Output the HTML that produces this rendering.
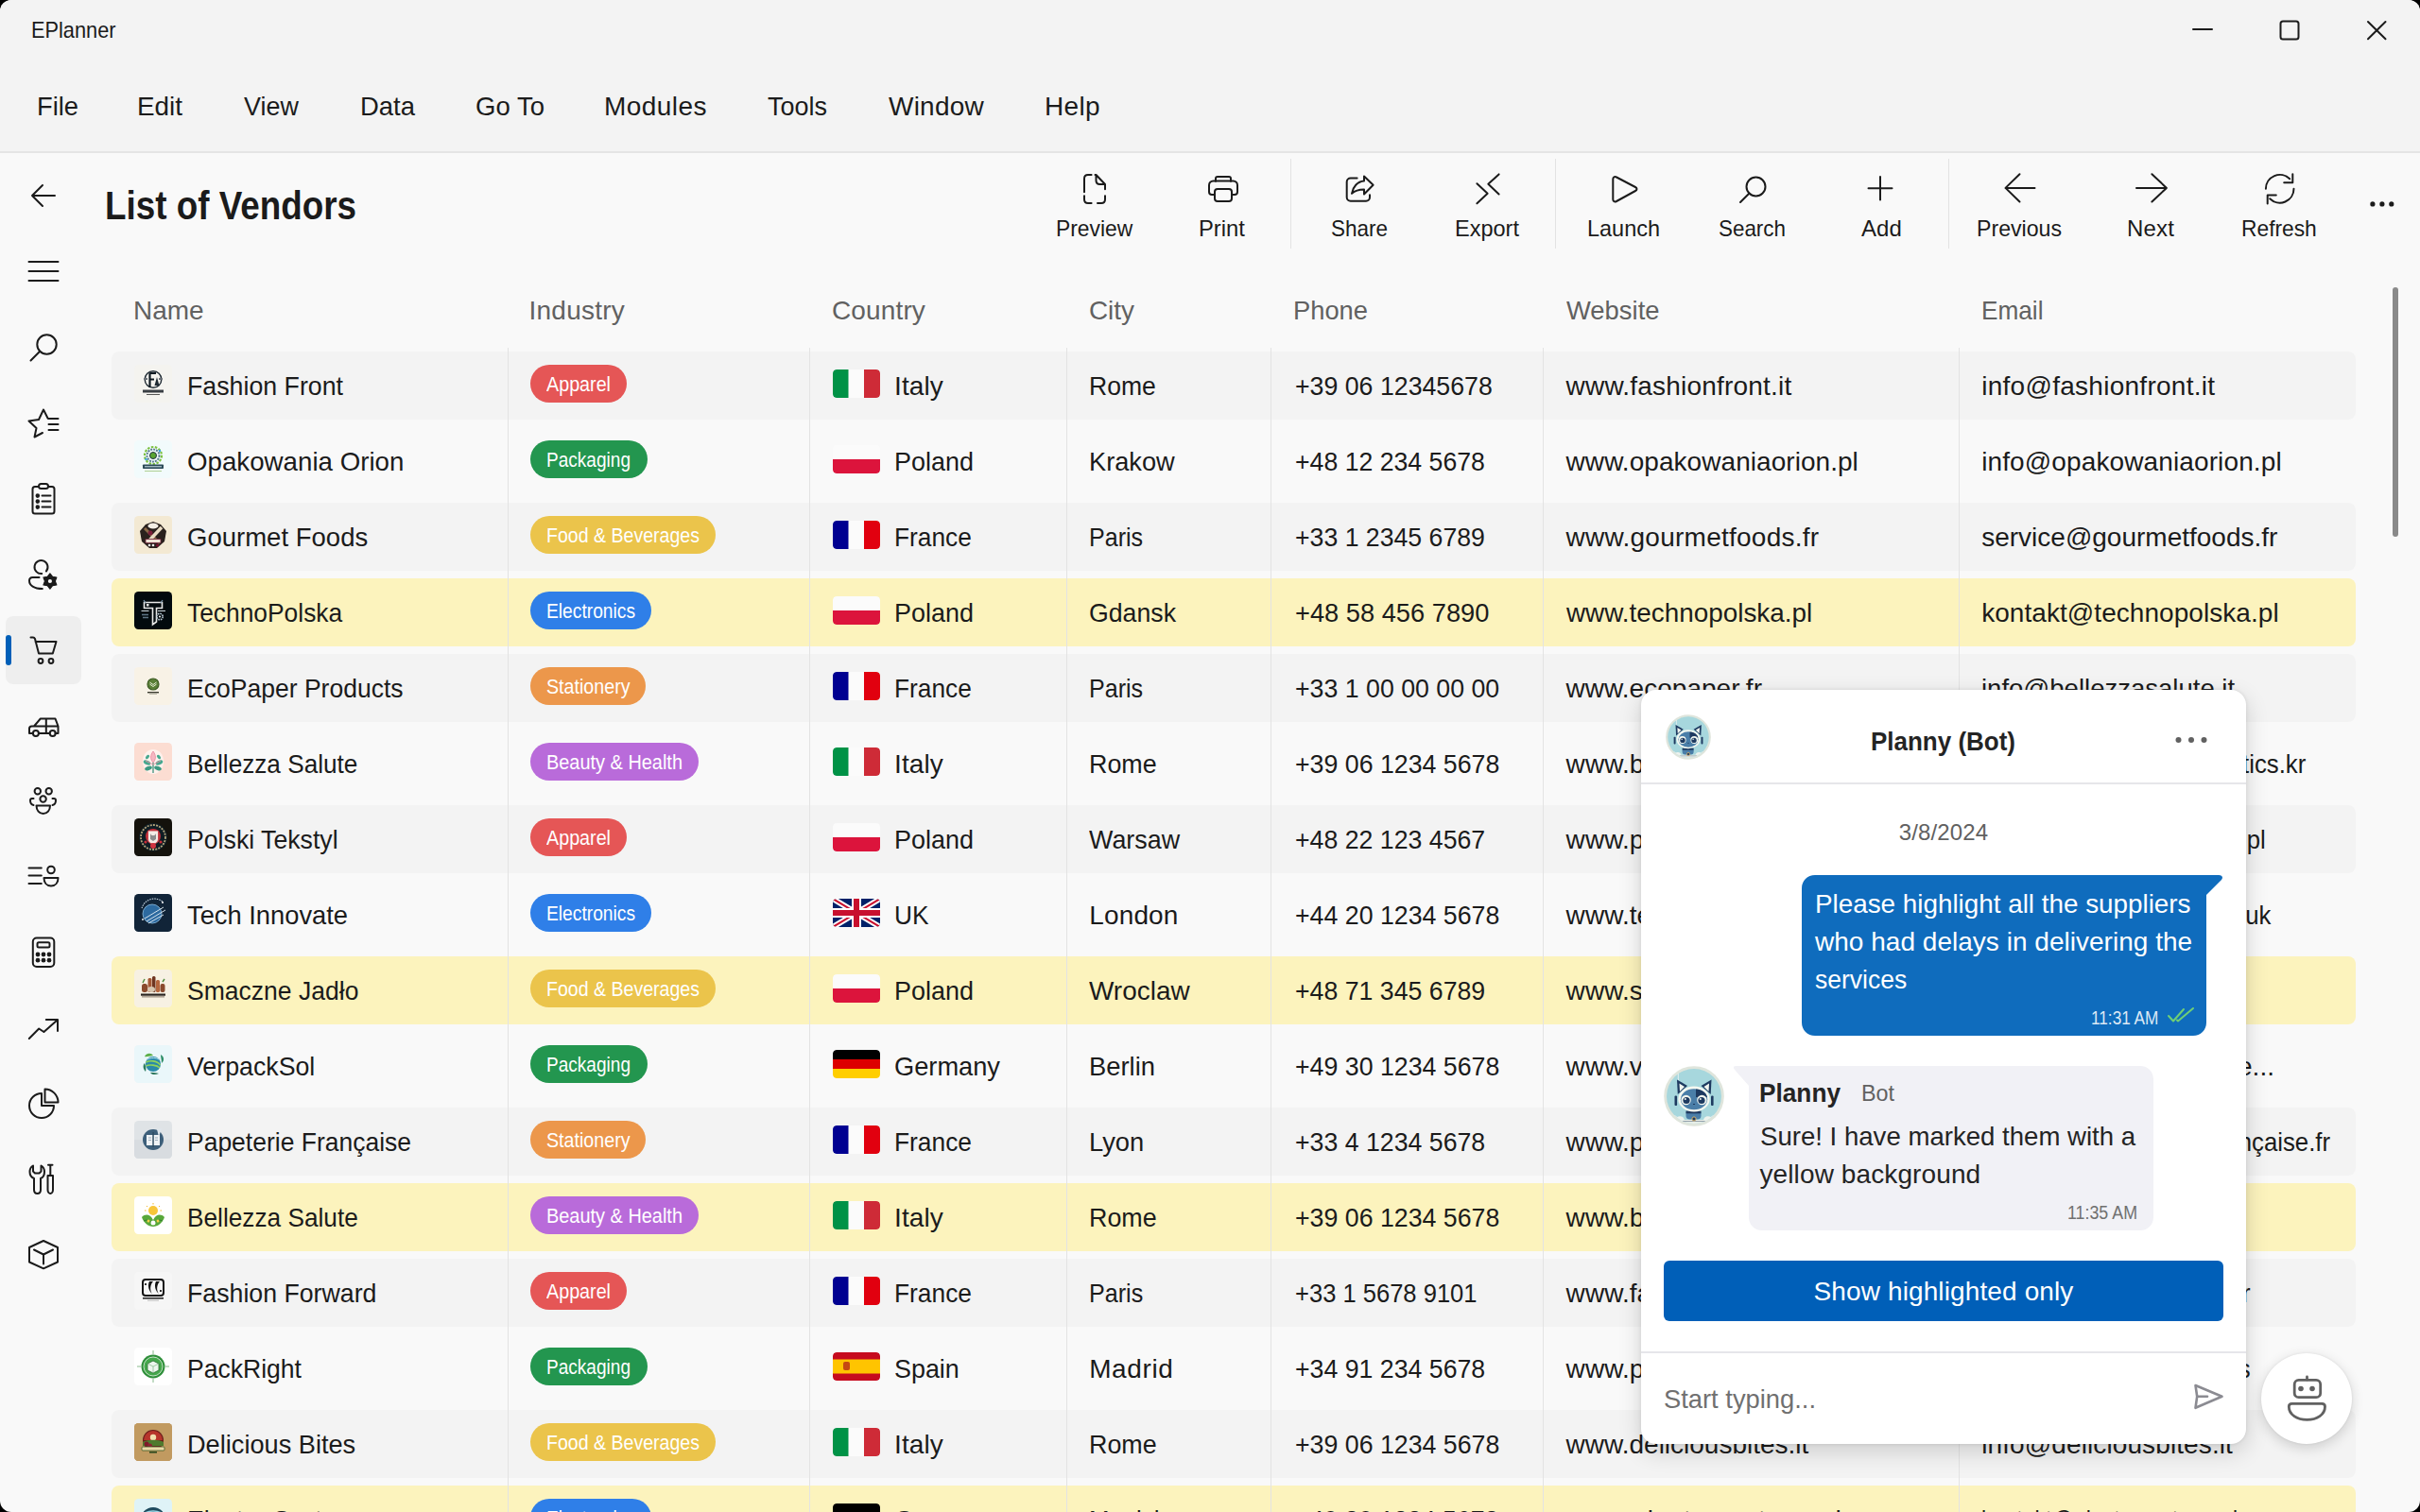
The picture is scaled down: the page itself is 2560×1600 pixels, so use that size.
<!DOCTYPE html>
<html><head><meta charset='utf-8'><title>EPlanner - List of Vendors</title>
<style>
html,body{margin:0;padding:0;background:#000;width:2560px;height:1600px;overflow:hidden}
#win{position:absolute;left:0;top:0;width:2560px;height:1600px;background:#f9f9f9;border-radius:12px;overflow:hidden;font-family:"Liberation Sans", sans-serif}
.t{position:absolute;white-space:pre;font-family:"Liberation Sans", sans-serif;transform-origin:0 0}
</style></head><body><div id='win'>
<div style='position:absolute;left:0px;top:0px;width:2560px;height:160px;background:#f3f3f3;border-radius:0px;'></div>
<div style='position:absolute;left:0px;top:160px;width:2560px;height:2px;background:#e5e5e5;border-radius:0px;'></div>
<div class='t' style='left:33.0px;top:20.0px;font-size:24px;line-height:24px;color:#1b1b1b;transform:scaleX(0.9065);'>EPlanner</div>
<svg style='position:absolute;left:2310px;top:10px;' width='40' height='40' viewBox='2310 10 40 40' fill='none' stroke='#1b1b1b' stroke-width='2' stroke-linecap='round' stroke-linejoin='round'><path d='M2320 31H2340' stroke-width='2'/></svg>
<svg style='position:absolute;left:2400px;top:10px;' width='44' height='44' viewBox='2400 10 44 44' fill='none' stroke='#1b1b1b' stroke-width='2' stroke-linecap='round' stroke-linejoin='round'><rect x='2412.5' y='22.5' width='19' height='19' rx='2.5' stroke-width='2'/></svg>
<svg style='position:absolute;left:2494px;top:12px;' width='40' height='40' viewBox='2494 12 40 40' fill='none' stroke='#1b1b1b' stroke-width='2' stroke-linecap='round' stroke-linejoin='round'><path d='M2505 23L2523.5 41.2M2523.5 23L2505 41.2' stroke-width='2'/></svg>
<div class='t' style='left:39.0px;top:99.0px;font-size:28px;line-height:28px;color:#1b1b1b;transform:scaleX(0.9751);'>File</div>
<div class='t' style='left:145.0px;top:99.0px;font-size:28px;line-height:28px;color:#1b1b1b;transform:scaleX(0.9948);'>Edit</div>
<div class='t' style='left:258.2px;top:99.0px;font-size:28px;line-height:28px;color:#1b1b1b;transform:scaleX(0.9603);'>View</div>
<div class='t' style='left:381.0px;top:99.0px;font-size:28px;line-height:28px;color:#1b1b1b;transform:scaleX(0.9805);'>Data</div>
<div class='t' style='left:503.0px;top:99.0px;font-size:28px;line-height:28px;color:#1b1b1b;transform:scaleX(0.9838);'>Go To</div>
<div class='t' style='left:639.0px;top:99.0px;font-size:28px;line-height:28px;color:#1b1b1b;letter-spacing:0.451px;'>Modules</div>
<div class='t' style='left:812.0px;top:99.0px;font-size:28px;line-height:28px;color:#1b1b1b;transform:scaleX(0.9637);'>Tools</div>
<div class='t' style='left:940.0px;top:99.0px;font-size:28px;line-height:28px;color:#1b1b1b;letter-spacing:0.234px;'>Window</div>
<div class='t' style='left:1105.0px;top:99.0px;font-size:28px;line-height:28px;color:#1b1b1b;letter-spacing:0.352px;'>Help</div>
<div class='t' style='left:111.0px;top:197.3px;font-size:42px;line-height:42px;color:#1b1b1b;font-weight:700;transform:scaleX(0.8768);'>List of Vendors</div>
<div class='t' style='left:1116.7px;top:230.0px;font-size:24px;line-height:24px;color:#1b1b1b;transform:scaleX(0.9513);'>Preview</div>
<div class='t' style='left:1268.1px;top:230.0px;font-size:24px;line-height:24px;color:#1b1b1b;transform:scaleX(0.9907);'>Print</div>
<div class='t' style='left:1408.0px;top:230.0px;font-size:24px;line-height:24px;color:#1b1b1b;transform:scaleX(0.9368);'>Share</div>
<div class='t' style='left:1539.0px;top:230.0px;font-size:24px;line-height:24px;color:#1b1b1b;transform:scaleX(0.9802);'>Export</div>
<div class='t' style='left:1679.0px;top:230.0px;font-size:24px;line-height:24px;color:#1b1b1b;transform:scaleX(0.9778);'>Launch</div>
<div class='t' style='left:1818.0px;top:230.0px;font-size:24px;line-height:24px;color:#1b1b1b;transform:scaleX(0.9336);'>Search</div>
<div class='t' style='left:1969.0px;top:230.0px;font-size:24px;line-height:24px;color:#1b1b1b;letter-spacing:0.099px;'>Add</div>
<div class='t' style='left:2091.0px;top:230.0px;font-size:24px;line-height:24px;color:#1b1b1b;transform:scaleX(0.9639);'>Previous</div>
<div class='t' style='left:2250.0px;top:230.0px;font-size:24px;line-height:24px;color:#1b1b1b;letter-spacing:0.160px;'>Next</div>
<div class='t' style='left:2371.4px;top:230.0px;font-size:24px;line-height:24px;color:#1b1b1b;transform:scaleX(0.9495);'>Refresh</div>
<div style='position:absolute;left:1364.5px;top:168px;width:1.5px;height:95px;background:#e3e3e3;border-radius:0px;'></div>
<div style='position:absolute;left:1644.5px;top:168px;width:1.5px;height:95px;background:#e3e3e3;border-radius:0px;'></div>
<div style='position:absolute;left:2060.5px;top:168px;width:1.5px;height:95px;background:#e3e3e3;border-radius:0px;'></div>
<svg style='position:absolute;left:1140px;top:180px;' width='36' height='40' viewBox='1140 180 36 40' fill='none' stroke='#1b1b1b' stroke-width='2' stroke-linecap='round' stroke-linejoin='round'><path d='M1154.6 185H1151C1148.5 185 1147 186.5 1147 189V203.2M1147 207.2V211C1147 213.5 1148.5 215 1151 215H1154.6M1161 215H1165C1167.5 215 1169 213.5 1169 211V207.2M1169 200.3V195L1159.5 185H1158.5M1159.5 185V191C1159.5 193.5 1161 195 1163.5 195H1169'/></svg>
<svg style='position:absolute;left:1274px;top:180px;' width='40' height='40' viewBox='1274 180 40 40' fill='none' stroke='#1b1b1b' stroke-width='2' stroke-linecap='round' stroke-linejoin='round'><path d='M1286 192V189C1286 187.5 1287 187 1288 187H1300C1301 187 1302 187.5 1302 189V192M1284 206H1282C1280 206 1279 205 1279 203V196C1279 193.5 1281 191.5 1283.5 191.5H1304.5C1307 191.5 1309 193.5 1309 196V203C1309 205 1308 206 1306 206H1304M1288 200H1300C1302 200 1303 201 1303 203V210C1303 212 1302 213 1300 213H1288C1286 213 1285 212 1285 210V203C1285 201 1286 200 1288 200Z'/></svg>
<svg style='position:absolute;left:1418px;top:180px;' width='42' height='40' viewBox='1418 180 42 40' fill='none' stroke='#1b1b1b' stroke-width='2' stroke-linecap='round' stroke-linejoin='round'><path d='M1435.6 188.6H1428.7C1426.5 188.6 1424.7 190.4 1424.7 192.6V208.8C1424.7 211 1426.5 212.8 1428.7 212.8H1445C1447.2 212.8 1449 211 1449 208.8V206.2M1443 186.5L1452.6 195.7L1443 205.5V200.5C1437 200.5 1433 202 1430 204.8C1431 198 1436 192 1443 191.5Z'/></svg>
<svg style='position:absolute;left:1556px;top:178px;' width='36' height='42' viewBox='1556 178 36 42' fill='none' stroke='#1b1b1b' stroke-width='2' stroke-linecap='round' stroke-linejoin='round'><path d='M1562.4 194.3L1573.6 204.8L1562.4 215.3M1585.6 184.4L1574.3 194.7L1585.6 205.5'/></svg>
<svg style='position:absolute;left:1700px;top:180px;' width='40' height='40' viewBox='1700 180 40 40' fill='none' stroke='#1b1b1b' stroke-width='2' stroke-linecap='round' stroke-linejoin='round'><path d='M1706.3 189.5V211C1706.3 213 1708 214 1710 213L1730 202C1732 201 1732 199 1730 198L1710 187.5C1708 186.5 1706.3 187.5 1706.3 189.5Z'/></svg>
<svg style='position:absolute;left:1834px;top:180px;' width='40' height='40' viewBox='1834 180 40 40' fill='none' stroke='#1b1b1b' stroke-width='2' stroke-linecap='round' stroke-linejoin='round'><circle cx='1857.5' cy='197.5' r='10'/><path d='M1850.5 204.5L1841 214'/></svg>
<svg style='position:absolute;left:1972px;top:180px;' width='36' height='36' viewBox='1972 180 36 36' fill='none' stroke='#1b1b1b' stroke-width='2' stroke-linecap='round' stroke-linejoin='round'><path d='M1989 187V211.5M1976.5 199.2H2001.5'/></svg>
<svg style='position:absolute;left:2116px;top:180px;' width='42' height='40' viewBox='2116 180 42 40' fill='none' stroke='#1b1b1b' stroke-width='2' stroke-linecap='round' stroke-linejoin='round'><path d='M2152.5 198.9H2121.5M2136.5 184.3L2121.5 198.9L2136.5 213.5'/></svg>
<svg style='position:absolute;left:2254px;top:180px;' width='42' height='40' viewBox='2254 180 42 40' fill='none' stroke='#1b1b1b' stroke-width='2' stroke-linecap='round' stroke-linejoin='round'><path d='M2260 198.9H2291.9M2276.4 184.3L2291.9 198.9L2276.4 213.5'/></svg>
<svg style='position:absolute;left:2390px;top:178px;' width='44' height='44' viewBox='2390 178 44 44' fill='none' stroke='#1b1b1b' stroke-width='2' stroke-linecap='round' stroke-linejoin='round'><path d='M2396.9 199.8A14.8 14.8 0 0 1 2422.2 189.3M2425.3 184.2V193.3H2416.2M2426.5 199.8A14.8 14.8 0 0 1 2401.2 210.3M2398.7 215.6V206.4H2407.8'/></svg>
<svg style='position:absolute;left:2500px;top:205px' width='40' height='20' viewBox='2500 205 40 20'><circle cx='2509.9' cy='215.9' r='2.6' fill='#1b1b1b'/><circle cx='2519.9' cy='215.9' r='2.6' fill='#1b1b1b'/><circle cx='2529.8' cy='215.9' r='2.6' fill='#1b1b1b'/></svg>
<div style='position:absolute;left:6px;top:652px;width:80px;height:72px;background:#eeeeee;border-radius:8px;'></div>
<div style='position:absolute;left:6px;top:672px;width:6px;height:32px;background:#005fb8;border-radius:3px;'></div>
<svg style='position:absolute;left:0;top:160px' width='100' height='1200' viewBox='0 160 100 1200' fill='none' stroke='#1b1b1b' stroke-width='2' stroke-linecap='round' stroke-linejoin='round'><path d='M58 207H34M45 196L34 207L45 218'/><path d='M30.5 277H61.5M30.5 287H61.5M30.5 297H61.5'/><circle cx='49.5' cy='364.5' r='10.2'/><path d='M42.2 371.8L32.5 381.5'/><path d='M50.5 442.5L46 433.5L41 444L30.5 445.5L38.5 453L36.5 462.5L45 458M51 443H61.5M51.5 449H61.5M51.5 455H61.5'/><rect x='34.5' y='515' width='23' height='28.5' rx='2.5'/><rect x='41' y='512' width='10' height='5' rx='2.5' fill='#f9f9f9'/><path d='M44.5 524.6H53.5M44.5 530.6H53.5M44.5 536.6H53.5'/><circle cx='39.8' cy='524.6' r='1.3' fill='#1b1b1b'/><circle cx='39.8' cy='530.6' r='1.3' fill='#1b1b1b'/><circle cx='39.8' cy='536.6' r='1.3' fill='#1b1b1b'/><path d='M48.9 604.5A7 7 0 1 0 44.2 607'/><path d='M41.5 611H34.5C32.5 611 31 612.5 31 614.5C31 619.5 36 623 44.8 623'/><path d='M52.90 607.00L55.60 610.32L59.83 611.00L58.30 615.00L59.83 619.00L55.60 619.68L52.90 623.00L50.20 619.68L45.97 619.00L47.50 615.00L45.97 611.00L50.20 610.32Z' fill='#1b1b1b' stroke='#1b1b1b' stroke-width='1.2'/><circle cx='52.9' cy='615' r='2.1' fill='#f9f9f9' stroke='none'/><path d='M32.5 674.5H35C36 674.5 36.5 675 37 676L41 691.5H55.8L59.5 679H37.5'/><circle cx='43' cy='699.5' r='2.4'/><circle cx='54' cy='699.5' r='2.4'/><path d='M35 776H31V771C31 769.5 32 768.5 33.5 768.5H36L42.8 760.5H58.5L61.5 768.5V776H58.5M41 776H52.5M36 768.5H61M48.8 760.5V776'/><circle cx='37.9' cy='776' r='3'/><circle cx='55.7' cy='776' r='3'/><circle cx='39.8' cy='837.3' r='3.2'/><circle cx='51.7' cy='837.3' r='3.2'/><circle cx='45.6' cy='845.5' r='3.2'/><path d='M35.5 845H34C32.5 845 32 846 32 847C32 849.5 33.5 851.5 35.5 852M55.5 845H57C58.5 845 59 846 59 847C59 849.5 57.5 851.5 55.5 852M38.5 852.5H53C53 857.5 50 861 45.7 861C41.5 861 38.5 857.5 38.5 852.5Z'/><path d='M30.5 918.6H43.8M30.5 926.6H43.8M30.5 935H43.8'/><circle cx='54' cy='920.5' r='3.8'/><path d='M46.5 929H61.5C61.5 934 58.5 937.5 54 937.5C49.5 937.5 46.5 934 46.5 929Z'/><rect x='34.8' y='992.5' width='22.5' height='30.5' rx='4'/><rect x='39.5' y='997.2' width='13' height='5.2' rx='1.5'/><circle cx='40' cy='1010' r='1.4' fill='#1b1b1b'/><circle cx='46' cy='1010' r='1.4' fill='#1b1b1b'/><circle cx='52' cy='1010' r='1.4' fill='#1b1b1b'/><circle cx='40' cy='1016.2' r='1.4' fill='#1b1b1b'/><circle cx='46' cy='1016.2' r='1.4' fill='#1b1b1b'/><circle cx='52' cy='1016.2' r='1.4' fill='#1b1b1b'/><path d='M30.8 1099L41.2 1088.5L46.4 1092L60.8 1079.3M48.8 1079H61V1091'/><path d='M44 1157A13 13 0 1 0 57 1170H44Z'/><path d='M47.5 1152.5A14 14 0 0 1 61.5 1166.5H47.5Z'/><path d='M35 1233.5C32.5 1235 31.5 1237.5 31.5 1240C31.5 1243.5 33.5 1246 36 1247V1259C36 1261.5 37.5 1263 39.5 1263C41.5 1263 43 1261.5 43 1259V1247C45.5 1246 47 1243.5 47 1240C47 1237.5 46 1235 43.5 1233.5V1239.5L41.5 1241.5H37L35 1239.5Z'/><path d='M51 1232.8H55.5M53.3 1233V1244M50.5 1244H56V1259C56 1261.5 54.5 1263 53.3 1263C52 1263 50.5 1261.5 50.5 1259Z'/><path d='M46 1313L61 1320V1335.5L46 1342.3L31 1335.5V1320Z'/><path d='M36 1322.5L46 1327.5L56 1322.5M46 1327.5V1337.5'/></svg>
<div class='t' style='left:141.0px;top:315.0px;font-size:28px;line-height:28px;color:#616161;'>Name</div>
<div class='t' style='left:559.5px;top:315.0px;font-size:28px;line-height:28px;color:#616161;letter-spacing:0.236px;'>Industry</div>
<div class='t' style='left:880.0px;top:315.0px;font-size:28px;line-height:28px;color:#616161;letter-spacing:0.136px;'>Country</div>
<div class='t' style='left:1152.0px;top:315.0px;font-size:28px;line-height:28px;color:#616161;transform:scaleX(0.9951);'>City</div>
<div class='t' style='left:1368.0px;top:315.0px;font-size:28px;line-height:28px;color:#616161;transform:scaleX(0.9757);'>Phone</div>
<div class='t' style='left:1657.0px;top:315.0px;font-size:28px;line-height:28px;color:#616161;transform:scaleX(0.9787);'>Website</div>
<div class='t' style='left:2096.0px;top:315.0px;font-size:28px;line-height:28px;color:#616161;transform:scaleX(0.9355);'>Email</div>
<div style='position:absolute;left:118px;top:372px;width:2374px;height:72px;background:#f3f3f3;border-radius:8px;'></div>
<div style='position:absolute;left:118px;top:532px;width:2374px;height:72px;background:#f3f3f3;border-radius:8px;'></div>
<div style='position:absolute;left:118px;top:612px;width:2374px;height:72px;background:#fcf3bd;border-radius:8px;'></div>
<div style='position:absolute;left:118px;top:692px;width:2374px;height:72px;background:#f3f3f3;border-radius:8px;'></div>
<div style='position:absolute;left:118px;top:852px;width:2374px;height:72px;background:#f3f3f3;border-radius:8px;'></div>
<div style='position:absolute;left:118px;top:1012px;width:2374px;height:72px;background:#fcf3bd;border-radius:8px;'></div>
<div style='position:absolute;left:118px;top:1172px;width:2374px;height:72px;background:#f3f3f3;border-radius:8px;'></div>
<div style='position:absolute;left:118px;top:1252px;width:2374px;height:72px;background:#fcf3bd;border-radius:8px;'></div>
<div style='position:absolute;left:118px;top:1332px;width:2374px;height:72px;background:#f3f3f3;border-radius:8px;'></div>
<div style='position:absolute;left:118px;top:1492px;width:2374px;height:72px;background:#f3f3f3;border-radius:8px;'></div>
<div style='position:absolute;left:118px;top:1572px;width:2374px;height:72px;background:#fcf3bd;border-radius:8px;'></div>
<div style='position:absolute;left:537px;top:368px;width:1px;height:1232px;background:#e3e3e3;border-radius:0px;'></div>
<div style='position:absolute;left:856px;top:368px;width:1px;height:1232px;background:#e3e3e3;border-radius:0px;'></div>
<div style='position:absolute;left:1127.5px;top:368px;width:1px;height:1232px;background:#e3e3e3;border-radius:0px;'></div>
<div style='position:absolute;left:1344px;top:368px;width:1px;height:1232px;background:#e3e3e3;border-radius:0px;'></div>
<div style='position:absolute;left:1631.5px;top:368px;width:1px;height:1232px;background:#e3e3e3;border-radius:0px;'></div>
<div style='position:absolute;left:2072px;top:368px;width:1px;height:1232px;background:#e3e3e3;border-radius:0px;'></div>
<svg style='position:absolute;left:142px;top:386px' width='40' height='40' viewBox='0 0 40 40'><defs><clipPath id='lg0'><rect width='40' height='40' rx='4.5'/></clipPath></defs><g clip-path='url(#lg0)'><rect width='40' height='40' fill='#f4f3ef'/>
<circle cx='20' cy='15.5' r='8.8' fill='none' stroke='#1f2a33' stroke-width='1.4'/>
<path d='M16.5 8.5V24M16.5 9H23M16.5 15.5H21' stroke='#0f1a22' stroke-width='2.2' fill='none'/>
<path d='M24 13L26.5 22H21.5Z' fill='#1f2a33'/>
<rect x='10' y='14' width='4' height='2' fill='#6b7178'/><rect x='26' y='14' width='4' height='2' fill='#6b7178'/>
<rect x='9' y='26.5' width='22' height='3' fill='#3a3f44'/>
<rect x='13' y='31' width='14' height='1' fill='#555'/>
</g></svg>
<div class='t' style='left:198.0px;top:395.0px;font-size:28px;line-height:28px;color:#1b1b1b;transform:scaleX(0.9551);'>Fashion Front</div>
<div style='position:absolute;left:561px;top:386px;width:101.7px;height:40px;background:#e55656;border-radius:20px;'></div>
<div class='t' style='left:577.9px;top:396.0px;font-size:22px;line-height:22px;color:#ffffff;transform:scaleX(0.8966);'>Apparel</div>
<svg style='position:absolute;left:881px;top:391px;border-radius:4px' width='50' height='30' viewBox='0 0 50 30'><defs><clipPath id='c881391'><rect width='50' height='30' rx='4'/></clipPath></defs><g clip-path='url(#c881391)'><rect x='0' y='0' width='17' height='30' fill='#009246'/><rect x='16.5' y='0' width='17' height='30' fill='#fbfbfb'/><rect x='33' y='0' width='17' height='30' fill='#ce2b37'/></g></svg>
<div class='t' style='left:946.0px;top:395.0px;font-size:28px;line-height:28px;color:#1b1b1b;letter-spacing:0.108px;'>Italy</div>
<div class='t' style='left:1152.2px;top:395.0px;font-size:28px;line-height:28px;color:#1b1b1b;transform:scaleX(0.9478);'>Rome</div>
<div class='t' style='left:1370.0px;top:395.0px;font-size:28px;line-height:28px;color:#1b1b1b;transform:scaleX(0.9544);'>+39 06 12345678</div>
<div class='t' style='left:1656.6px;top:395.0px;font-size:28px;line-height:28px;color:#1b1b1b;letter-spacing:0.205px;'>www.fashionfront.it</div>
<div class='t' style='left:2096.2px;top:395.0px;font-size:28px;line-height:28px;color:#1b1b1b;letter-spacing:0.276px;'>info@fashionfront.it</div>
<svg style='position:absolute;left:142px;top:466px' width='40' height='40' viewBox='0 0 40 40'><defs><clipPath id='lg1'><rect width='40' height='40' rx='4.5'/></clipPath></defs><g clip-path='url(#lg1)'><rect width='40' height='40' fill='#f2fbfc'/>
<circle cx='20' cy='16' r='9' fill='none' stroke='#7cc142' stroke-width='2.2' stroke-dasharray='2.5 1.5'/>
<circle cx='20' cy='16' r='6.5' fill='none' stroke='#5b7d92' stroke-width='2' stroke-dasharray='2 1'/>
<circle cx='20' cy='16' r='3.5' fill='#5aa532' stroke='#234' stroke-width='1'/>
<circle cx='12.5' cy='20' r='1.2' fill='#38a6e0'/><circle cx='27' cy='11' r='1.2' fill='#38a6e0'/>
<rect x='9' y='25.5' width='22' height='4.5' rx='0.8' fill='#2c4a58'/>
<rect x='11' y='27.3' width='18' height='1' fill='#cfe3ea'/>
<rect x='11' y='32' width='18' height='0.8' fill='#9fc77a'/>
</g></svg>
<div class='t' style='left:198.0px;top:475.0px;font-size:28px;line-height:28px;color:#1b1b1b;transform:scaleX(0.9892);'>Opakowania Orion</div>
<div style='position:absolute;left:561px;top:466px;width:123.6px;height:40px;background:#23964f;border-radius:20px;'></div>
<div class='t' style='left:578.3px;top:476.0px;font-size:22px;line-height:22px;color:#ffffff;transform:scaleX(0.8662);'>Packaging</div>
<svg style='position:absolute;left:881px;top:471px;border-radius:4px' width='50' height='30' viewBox='0 0 50 30'><defs><clipPath id='c881471'><rect width='50' height='30' rx='4'/></clipPath></defs><g clip-path='url(#c881471)'><rect x='0' y='0' width='50' height='15' fill='#fbfbfb'/><rect x='0' y='15' width='50' height='15' fill='#dc143c'/></g></svg>
<div class='t' style='left:946.0px;top:475.0px;font-size:28px;line-height:28px;color:#1b1b1b;transform:scaleX(0.9623);'>Poland</div>
<div class='t' style='left:1152.2px;top:475.0px;font-size:28px;line-height:28px;color:#1b1b1b;transform:scaleX(0.9714);'>Krakow</div>
<div class='t' style='left:1370.0px;top:475.0px;font-size:28px;line-height:28px;color:#1b1b1b;transform:scaleX(0.9522);'>+48 12 234 5678</div>
<div class='t' style='left:1656.6px;top:475.0px;font-size:28px;line-height:28px;color:#1b1b1b;letter-spacing:0.051px;'>www.opakowaniaorion.pl</div>
<div class='t' style='left:2096.2px;top:475.0px;font-size:28px;line-height:28px;color:#1b1b1b;letter-spacing:0.119px;'>info@opakowaniaorion.pl</div>
<svg style='position:absolute;left:142px;top:546px' width='40' height='40' viewBox='0 0 40 40'><defs><clipPath id='lg2'><rect width='40' height='40' rx='4.5'/></clipPath></defs><g clip-path='url(#lg2)'><rect width='40' height='40' fill='#f3e9d3'/>
<path d='M20 6L28 9L34 16L32 27L24 34L16 34L8 27L6 16L12 9Z' fill='#2a211d'/>
<ellipse cx='20' cy='10.5' rx='5.5' ry='3' fill='#f4efe6'/>
<path d='M11 13L27 29' stroke='#8b6a4a' stroke-width='3'/>
<path d='M29 12L14 28' stroke='#e9dcc4' stroke-width='3.5'/>
<circle cx='17' cy='18' r='2.5' fill='#7a1f3a'/>
<rect x='12' y='24.5' width='16' height='4' fill='#efe4d6' stroke='#6b2035' stroke-width='0.8'/>
<circle cx='16' cy='31' r='1.3' fill='#f2f2f2'/><circle cx='20' cy='31' r='1.3' fill='#f2f2f2'/><circle cx='24.5' cy='31' r='1.5' fill='#7a1030'/>
</g></svg>
<div class='t' style='left:198.0px;top:555.0px;font-size:28px;line-height:28px;color:#1b1b1b;transform:scaleX(0.9829);'>Gourmet Foods</div>
<div style='position:absolute;left:561px;top:546px;width:195.6px;height:40px;background:#ebc44b;border-radius:20px;'></div>
<div class='t' style='left:577.8px;top:556.0px;font-size:22px;line-height:22px;color:#ffffff;transform:scaleX(0.8890);'>Food &amp; Beverages</div>
<svg style='position:absolute;left:881px;top:551px;border-radius:4px' width='50' height='30' viewBox='0 0 50 30'><defs><clipPath id='c881551'><rect width='50' height='30' rx='4'/></clipPath></defs><g clip-path='url(#c881551)'><rect x='0' y='0' width='17' height='30' fill='#000091'/><rect x='16.5' y='0' width='17' height='30' fill='#fbfbfb'/><rect x='33' y='0' width='17' height='30' fill='#e1000f'/></g></svg>
<div class='t' style='left:946.0px;top:555.0px;font-size:28px;line-height:28px;color:#1b1b1b;transform:scaleX(0.9385);'>France</div>
<div class='t' style='left:1152.2px;top:555.0px;font-size:28px;line-height:28px;color:#1b1b1b;transform:scaleX(0.8950);'>Paris</div>
<div class='t' style='left:1370.0px;top:555.0px;font-size:28px;line-height:28px;color:#1b1b1b;transform:scaleX(0.9522);'>+33 1 2345 6789</div>
<div class='t' style='left:1656.6px;top:555.0px;font-size:28px;line-height:28px;color:#1b1b1b;letter-spacing:0.253px;'>www.gourmetfoods.fr</div>
<div class='t' style='left:2096.2px;top:555.0px;font-size:28px;line-height:28px;color:#1b1b1b;'>service@gourmetfoods.fr</div>
<svg style='position:absolute;left:142px;top:626px' width='40' height='40' viewBox='0 0 40 40'><defs><clipPath id='lg3'><rect width='40' height='40' rx='4.5'/></clipPath></defs><g clip-path='url(#lg3)'><rect width='40' height='40' fill='#020a0e'/>
<path d='M10.5 11.5H29.5V17.5H23.5V32L19.5 35V17.5H10.5Z' fill='none' stroke='#e8e8e8' stroke-width='1.6'/>
<rect x='13' y='13' width='2.5' height='2.5' fill='#e8e8e8'/>
<path d='M7.5 20.5H15.5M25 20.5H33' stroke='#cfd8de' stroke-width='1.1'/>
<path d='M8 24.5H15M9 27.5H15' stroke='#5d7385' stroke-width='1.3'/>
<circle cx='27' cy='26.5' r='3.2' fill='none' stroke='#b9c8d4' stroke-width='1.6' stroke-dasharray='1.6 0.9'/>
<circle cx='27' cy='26.5' r='1' fill='#fff'/>
<path d='M10 9L12 12M30 9L28 12' stroke='#7c97ad' stroke-width='1.2'/>
</g></svg>
<div class='t' style='left:198.0px;top:635.0px;font-size:28px;line-height:28px;color:#1b1b1b;transform:scaleX(0.9418);'>TechnoPolska</div>
<div style='position:absolute;left:561px;top:626px;width:127.6px;height:40px;background:#2f7fe8;border-radius:20px;'></div>
<div class='t' style='left:577.8px;top:636.0px;font-size:22px;line-height:22px;color:#ffffff;transform:scaleX(0.8737);'>Electronics</div>
<svg style='position:absolute;left:881px;top:631px;border-radius:4px' width='50' height='30' viewBox='0 0 50 30'><defs><clipPath id='c881631'><rect width='50' height='30' rx='4'/></clipPath></defs><g clip-path='url(#c881631)'><rect x='0' y='0' width='50' height='15' fill='#fbfbfb'/><rect x='0' y='15' width='50' height='15' fill='#dc143c'/></g></svg>
<div class='t' style='left:946.0px;top:635.0px;font-size:28px;line-height:28px;color:#1b1b1b;transform:scaleX(0.9623);'>Poland</div>
<div class='t' style='left:1152.2px;top:635.0px;font-size:28px;line-height:28px;color:#1b1b1b;transform:scaleX(0.9534);'>Gdansk</div>
<div class='t' style='left:1370.0px;top:635.0px;font-size:28px;line-height:28px;color:#1b1b1b;transform:scaleX(0.9735);'>+48 58 456 7890</div>
<div class='t' style='left:1656.6px;top:635.0px;font-size:28px;line-height:28px;color:#1b1b1b;transform:scaleX(0.9951);'>www.technopolska.pl</div>
<div class='t' style='left:2096.2px;top:635.0px;font-size:28px;line-height:28px;color:#1b1b1b;letter-spacing:0.053px;'>kontakt@technopolska.pl</div>
<svg style='position:absolute;left:142px;top:706px' width='40' height='40' viewBox='0 0 40 40'><defs><clipPath id='lg4'><rect width='40' height='40' rx='4.5'/></clipPath></defs><g clip-path='url(#lg4)'><rect width='40' height='40' fill='#f8f2e6'/>
<circle cx='20' cy='18' r='6' fill='#5a7f36'/>
<circle cx='20' cy='18' r='6' fill='none' stroke='#3e5c25' stroke-width='1.2'/>
<path d='M16.5 18L20 20.5L23.5 18M16.5 16L20 18.5L23.5 16' stroke='#e9efd8' stroke-width='1' fill='none'/>
<rect x='14' y='26' width='12' height='1.4' fill='#3a3a2e'/>
<rect x='16' y='28.3' width='8' height='0.6' fill='#9a9a88'/>
</g></svg>
<div class='t' style='left:198.0px;top:715.0px;font-size:28px;line-height:28px;color:#1b1b1b;transform:scaleX(0.9476);'>EcoPaper Products</div>
<div style='position:absolute;left:561px;top:706px;width:121.5px;height:40px;background:#ec974b;border-radius:20px;'></div>
<div class='t' style='left:577.5px;top:716.0px;font-size:22px;line-height:22px;color:#ffffff;transform:scaleX(0.8944);'>Stationery</div>
<svg style='position:absolute;left:881px;top:711px;border-radius:4px' width='50' height='30' viewBox='0 0 50 30'><defs><clipPath id='c881711'><rect width='50' height='30' rx='4'/></clipPath></defs><g clip-path='url(#c881711)'><rect x='0' y='0' width='17' height='30' fill='#000091'/><rect x='16.5' y='0' width='17' height='30' fill='#fbfbfb'/><rect x='33' y='0' width='17' height='30' fill='#e1000f'/></g></svg>
<div class='t' style='left:946.0px;top:715.0px;font-size:28px;line-height:28px;color:#1b1b1b;transform:scaleX(0.9385);'>France</div>
<div class='t' style='left:1152.2px;top:715.0px;font-size:28px;line-height:28px;color:#1b1b1b;transform:scaleX(0.8950);'>Paris</div>
<div class='t' style='left:1370.0px;top:715.0px;font-size:28px;line-height:28px;color:#1b1b1b;transform:scaleX(0.9543);'>+33 1 00 00 00 00</div>
<div class='t' style='left:1656.6px;top:715.0px;font-size:28px;line-height:28px;color:#1b1b1b;letter-spacing:0.027px;'>www.ecopaper.fr</div>
<div class='t' style='left:2096.2px;top:715.0px;font-size:28px;line-height:28px;color:#1b1b1b;transform:scaleX(0.9828);'>info@bellezzasalute.it</div>
<svg style='position:absolute;left:142px;top:786px' width='40' height='40' viewBox='0 0 40 40'><defs><clipPath id='lg5'><rect width='40' height='40' rx='4.5'/></clipPath></defs><g clip-path='url(#lg5)'><rect width='40' height='40' fill='#fcddd2'/>
<path d='M20 7C26 7 31 12 31 20C31 27 26 33 20 33C14 33 9 27 9 20C9 12 14 7 20 7Z' fill='#fff1ec'/>
<path d='M20 9C23 13 23.5 17 20 21C16.5 17 17 13 20 9Z' fill='#f6b7c2' stroke='#e88a9e' stroke-width='0.8'/>
<ellipse cx='13.5' cy='21' rx='4' ry='2.3' fill='#47a88f' transform='rotate(25 13.5 21)'/>
<ellipse cx='26.5' cy='21' rx='4' ry='2.3' fill='#47a88f' transform='rotate(-25 26.5 21)'/>
<ellipse cx='14' cy='15' rx='2.6' ry='1.6' fill='#47a88f' transform='rotate(-50 14 15)'/>
<ellipse cx='26' cy='15' rx='2.6' ry='1.6' fill='#47a88f' transform='rotate(50 26 15)'/>
<ellipse cx='15' cy='27' rx='4' ry='2' fill='#3c9a82' transform='rotate(-20 15 27)'/>
<ellipse cx='25' cy='27' rx='4' ry='2' fill='#3c9a82' transform='rotate(20 25 27)'/>
<path d='M20 21V32' stroke='#2f8b74' stroke-width='1.2'/>
<path d='M12 19L20 23L28 19' stroke='#e98fa3' stroke-width='0.9' fill='none'/>
</g></svg>
<div class='t' style='left:198.0px;top:795.0px;font-size:28px;line-height:28px;color:#1b1b1b;transform:scaleX(0.9346);'>Bellezza Salute</div>
<div style='position:absolute;left:561px;top:786px;width:177.9px;height:40px;background:#b96bda;border-radius:20px;'></div>
<div class='t' style='left:578.0px;top:796.0px;font-size:22px;line-height:22px;color:#ffffff;transform:scaleX(0.9057);'>Beauty &amp; Health</div>
<svg style='position:absolute;left:881px;top:791px;border-radius:4px' width='50' height='30' viewBox='0 0 50 30'><defs><clipPath id='c881791'><rect width='50' height='30' rx='4'/></clipPath></defs><g clip-path='url(#c881791)'><rect x='0' y='0' width='17' height='30' fill='#009246'/><rect x='16.5' y='0' width='17' height='30' fill='#fbfbfb'/><rect x='33' y='0' width='17' height='30' fill='#ce2b37'/></g></svg>
<div class='t' style='left:946.0px;top:795.0px;font-size:28px;line-height:28px;color:#1b1b1b;letter-spacing:0.128px;'>Italy</div>
<div class='t' style='left:1152.2px;top:795.0px;font-size:28px;line-height:28px;color:#1b1b1b;transform:scaleX(0.9598);'>Rome</div>
<div class='t' style='left:1370.0px;top:795.0px;font-size:28px;line-height:28px;color:#1b1b1b;transform:scaleX(0.9547);'>+39 06 1234 5678</div>
<div class='t' style='left:1656.6px;top:795.0px;font-size:28px;line-height:28px;color:#1b1b1b;letter-spacing:0.063px;'>www.bellezzasalute.it</div>
<div class='t' style='left:2133.7px;top:795.0px;font-size:28px;line-height:28px;color:#1b1b1b;transform:scaleX(0.9200);'>info@bellezzacosmetics.kr</div>
<svg style='position:absolute;left:142px;top:866px' width='40' height='40' viewBox='0 0 40 40'><defs><clipPath id='lg6'><rect width='40' height='40' rx='4.5'/></clipPath></defs><g clip-path='url(#lg6)'><rect width='40' height='40' fill='#14120c'/>
<circle cx='20' cy='20' r='15' fill='#0f1d24'/>
<circle cx='20' cy='20' r='13' fill='none' stroke='#b5a57a' stroke-width='1.8' stroke-dasharray='2 1.2'/>
<circle cx='20' cy='19' r='8' fill='#c2303a'/>
<path d='M14.5 13V22C14.5 25 17 27 20 27C23 27 25.5 25 25.5 22V13Z' fill='#f3ece6' stroke='#c2303a' stroke-width='0.8'/>
<path d='M17 16C18 19 22 19 23 16V22L20 24L17 22Z' fill='#8c8c8c'/>
<circle cx='20' cy='29' r='3' fill='#d03440'/>
<circle cx='12' cy='25' r='1.6' fill='#c82c36'/><circle cx='28' cy='25' r='1.6' fill='#c82c36'/>
</g></svg>
<div class='t' style='left:198.0px;top:875.0px;font-size:28px;line-height:28px;color:#1b1b1b;transform:scaleX(0.9526);'>Polski Tekstyl</div>
<div style='position:absolute;left:561px;top:866px;width:101.7px;height:40px;background:#e55656;border-radius:20px;'></div>
<div class='t' style='left:577.9px;top:876.0px;font-size:22px;line-height:22px;color:#ffffff;transform:scaleX(0.8966);'>Apparel</div>
<svg style='position:absolute;left:881px;top:871px;border-radius:4px' width='50' height='30' viewBox='0 0 50 30'><defs><clipPath id='c881871'><rect width='50' height='30' rx='4'/></clipPath></defs><g clip-path='url(#c881871)'><rect x='0' y='0' width='50' height='15' fill='#fbfbfb'/><rect x='0' y='15' width='50' height='15' fill='#dc143c'/></g></svg>
<div class='t' style='left:946.0px;top:875.0px;font-size:28px;line-height:28px;color:#1b1b1b;transform:scaleX(0.9623);'>Poland</div>
<div class='t' style='left:1152.2px;top:875.0px;font-size:28px;line-height:28px;color:#1b1b1b;transform:scaleX(0.9602);'>Warsaw</div>
<div class='t' style='left:1370.0px;top:875.0px;font-size:28px;line-height:28px;color:#1b1b1b;transform:scaleX(0.9536);'>+48 22 123 4567</div>
<div class='t' style='left:1656.6px;top:875.0px;font-size:28px;line-height:28px;color:#1b1b1b;letter-spacing:0.062px;'>www.polskitekstyl.pl</div>
<div class='t' style='left:2162.6px;top:875.0px;font-size:28px;line-height:28px;color:#1b1b1b;transform:scaleX(0.9200);'>info@polskitekstyl.pl</div>
<svg style='position:absolute;left:142px;top:946px' width='40' height='40' viewBox='0 0 40 40'><defs><clipPath id='lg7'><rect width='40' height='40' rx='4.5'/></clipPath></defs><g clip-path='url(#lg7)'><rect width='40' height='40' fill='#112438'/>
<circle cx='19' cy='21' r='10' fill='#2d6aa0'/>
<circle cx='19' cy='21' r='10' fill='none' stroke='#8fc2e6' stroke-width='0.8'/>
<path d='M11 26L31 14M13 29L33 17M15 31L31 22' stroke='#e4eef5' stroke-width='0.9'/>
<path d='M8 15A14 14 0 0 1 30 8' stroke='#c9d8e4' stroke-width='1.1' fill='none' stroke-dasharray='1.5 1'/>
<circle cx='30' cy='9' r='1' fill='#fff'/><circle cx='9' cy='27' r='0.9' fill='#fff'/>
</g></svg>
<div class='t' style='left:198.0px;top:955.0px;font-size:28px;line-height:28px;color:#1b1b1b;transform:scaleX(0.9751);'>Tech Innovate</div>
<div style='position:absolute;left:561px;top:946px;width:127.6px;height:40px;background:#2f7fe8;border-radius:20px;'></div>
<div class='t' style='left:577.8px;top:956.0px;font-size:22px;line-height:22px;color:#ffffff;transform:scaleX(0.8737);'>Electronics</div>
<svg style='position:absolute;left:881px;top:951px;border-radius:4px' width='50' height='30' viewBox='0 0 50 30'><defs><clipPath id='c881951'><rect width='50' height='30' rx='4'/></clipPath></defs><g clip-path='url(#c881951)'><rect x='0' y='0' width='50' height='30' fill='#012169'/><path d='M0 0L50 30M50 0L0 30' stroke='#fff' stroke-width='6'/><path d='M0 0L50 30M50 0L0 30' stroke='#c8102e' stroke-width='2'/><path d='M25 0V30M0 15H50' stroke='#fff' stroke-width='10'/><path d='M25 0V30M0 15H50' stroke='#c8102e' stroke-width='6'/></g></svg>
<div class='t' style='left:946.0px;top:955.0px;font-size:28px;line-height:28px;color:#1b1b1b;transform:scaleX(0.9382);'>UK</div>
<div class='t' style='left:1152.2px;top:955.0px;font-size:28px;line-height:28px;color:#1b1b1b;letter-spacing:0.160px;'>London</div>
<div class='t' style='left:1370.0px;top:955.0px;font-size:28px;line-height:28px;color:#1b1b1b;transform:scaleX(0.9547);'>+44 20 1234 5678</div>
<div class='t' style='left:1656.6px;top:955.0px;font-size:28px;line-height:28px;color:#1b1b1b;letter-spacing:0.068px;'>www.techinnovate.co.uk</div>
<div class='t' style='left:2119.5px;top:955.0px;font-size:28px;line-height:28px;color:#1b1b1b;transform:scaleX(0.9200);'>info@techinnovate.co.uk</div>
<svg style='position:absolute;left:142px;top:1026px' width='40' height='40' viewBox='0 0 40 40'><defs><clipPath id='lg8'><rect width='40' height='40' rx='4.5'/></clipPath></defs><g clip-path='url(#lg8)'><rect width='40' height='40' fill='#f7f1e3'/>
<rect x='8' y='15' width='6' height='9' rx='2.5' fill='#8a4a2c'/>
<rect x='14.5' y='9' width='4' height='15' rx='1.5' fill='#a45734'/>
<rect x='19' y='7' width='3.5' height='17' rx='1.5' fill='#6e3420'/>
<rect x='23' y='11' width='4' height='13' rx='1.5' fill='#b5663e'/>
<rect x='27.5' y='15' width='5' height='9' rx='2' fill='#8a4a2c'/>
<ellipse cx='18' cy='21' rx='4' ry='3' fill='#d7c6b0'/>
<rect x='7' y='25.5' width='26' height='2.2' fill='#2a2420'/>
<rect x='8' y='28.5' width='24' height='0.8' fill='#6b5a4a'/>
<path d='M9 14L11 10M30 13L32 10' stroke='#4e8a3a' stroke-width='1.4'/>
</g></svg>
<div class='t' style='left:198.0px;top:1035.0px;font-size:28px;line-height:28px;color:#1b1b1b;transform:scaleX(0.9476);'>Smaczne Jadło</div>
<div style='position:absolute;left:561px;top:1026px;width:195.6px;height:40px;background:#ebc44b;border-radius:20px;'></div>
<div class='t' style='left:577.8px;top:1036.0px;font-size:22px;line-height:22px;color:#ffffff;transform:scaleX(0.8890);'>Food &amp; Beverages</div>
<svg style='position:absolute;left:881px;top:1031px;border-radius:4px' width='50' height='30' viewBox='0 0 50 30'><defs><clipPath id='c8811031'><rect width='50' height='30' rx='4'/></clipPath></defs><g clip-path='url(#c8811031)'><rect x='0' y='0' width='50' height='15' fill='#fbfbfb'/><rect x='0' y='15' width='50' height='15' fill='#dc143c'/></g></svg>
<div class='t' style='left:946.0px;top:1035.0px;font-size:28px;line-height:28px;color:#1b1b1b;transform:scaleX(0.9623);'>Poland</div>
<div class='t' style='left:1152.2px;top:1035.0px;font-size:28px;line-height:28px;color:#1b1b1b;transform:scaleX(0.9977);'>Wroclaw</div>
<div class='t' style='left:1370.0px;top:1035.0px;font-size:28px;line-height:28px;color:#1b1b1b;transform:scaleX(0.9536);'>+48 71 345 6789</div>
<div class='t' style='left:1656.6px;top:1035.0px;font-size:28px;line-height:28px;color:#1b1b1b;letter-spacing:0.070px;'>www.smacznejadlo.pl</div>
<div class='t' style='left:2096.2px;top:1035.0px;font-size:28px;line-height:28px;color:#1b1b1b;'>info@smacznejadlo.pl</div>
<svg style='position:absolute;left:142px;top:1106px' width='40' height='40' viewBox='0 0 40 40'><defs><clipPath id='lg9'><rect width='40' height='40' rx='4.5'/></clipPath></defs><g clip-path='url(#lg9)'><rect width='40' height='40' fill='#eaf7fa'/>
<path d='M11 12C13 8 18 8 20 11C17 11 13 13 11 12Z' fill='#5db04a'/>
<path d='M28 10C32 12 32 17 29 19C29 16 28 13 28 10Z' fill='#2f8f6a'/>
<path d='M12 28C9 25 9 21 11 19C12 22 13 25 12 28Z' fill='#2a7a5e'/>
<path d='M26 30C22 32 18 31 17 29C20 29 23 29 26 30Z' fill='#1f6e52'/>
<circle cx='20' cy='20' r='8' fill='#2b8aa8'/>
<path d='M12.5 18C16 16 24 16 27.5 21M12.5 22C16 20 24 21 27 24' stroke='#8fd35c' stroke-width='1.6' fill='none'/>
<path d='M14 15C18 13 23 13 26 15' stroke='#bde8f2' stroke-width='1' fill='none'/>
</g></svg>
<div class='t' style='left:198.0px;top:1115.0px;font-size:28px;line-height:28px;color:#1b1b1b;transform:scaleX(0.9552);'>VerpackSol</div>
<div style='position:absolute;left:561px;top:1106px;width:123.6px;height:40px;background:#23964f;border-radius:20px;'></div>
<div class='t' style='left:578.3px;top:1116.0px;font-size:22px;line-height:22px;color:#ffffff;transform:scaleX(0.8662);'>Packaging</div>
<svg style='position:absolute;left:881px;top:1111px;border-radius:4px' width='50' height='30' viewBox='0 0 50 30'><defs><clipPath id='c8811111'><rect width='50' height='30' rx='4'/></clipPath></defs><g clip-path='url(#c8811111)'><rect x='0' y='0' width='50' height='10' fill='#000'/><rect x='0' y='10' width='50' height='10' fill='#dd0000'/><rect x='0' y='20' width='50' height='10' fill='#ffce00'/></g></svg>
<div class='t' style='left:946.0px;top:1115.0px;font-size:28px;line-height:28px;color:#1b1b1b;transform:scaleX(0.9726);'>Germany</div>
<div class='t' style='left:1152.2px;top:1115.0px;font-size:28px;line-height:28px;color:#1b1b1b;transform:scaleX(0.9777);'>Berlin</div>
<div class='t' style='left:1370.0px;top:1115.0px;font-size:28px;line-height:28px;color:#1b1b1b;transform:scaleX(0.9547);'>+49 30 1234 5678</div>
<div class='t' style='left:1656.6px;top:1115.0px;font-size:28px;line-height:28px;color:#1b1b1b;letter-spacing:0.070px;'>www.verpacksol.de</div>
<div class='t' style='left:1999.3px;top:1115.0px;font-size:28px;line-height:28px;color:#1b1b1b;'>kontakt@verpacksolutionen.de...</div>
<svg style='position:absolute;left:142px;top:1186px' width='40' height='40' viewBox='0 0 40 40'><defs><clipPath id='lg10'><rect width='40' height='40' rx='4.5'/></clipPath></defs><g clip-path='url(#lg10)'><rect width='40' height='40' fill='#dfe3e6'/>
<rect x='0' y='20' width='40' height='20' fill='#d8dce0'/>
<circle cx='20' cy='20' r='11' fill='#3d5f7a'/>
<path d='M13 15H19.5V26H13Z M20.5 15H27V26H20.5Z' fill='#eef2f5'/>
<path d='M15 18H18M15 20.5H18M22 18H25M22 20.5H25' stroke='#7890a4' stroke-width='0.7'/>
<path d='M24 9L29 8L26 17Z' fill='#dfe6ec'/>
<rect x='19.6' y='12' width='0.9' height='16' fill='#253f52'/>
</g></svg>
<div class='t' style='left:198.0px;top:1195.0px;font-size:28px;line-height:28px;color:#1b1b1b;transform:scaleX(0.9458);'>Papeterie Française</div>
<div style='position:absolute;left:561px;top:1186px;width:121.5px;height:40px;background:#ec974b;border-radius:20px;'></div>
<div class='t' style='left:577.5px;top:1196.0px;font-size:22px;line-height:22px;color:#ffffff;transform:scaleX(0.8944);'>Stationery</div>
<svg style='position:absolute;left:881px;top:1191px;border-radius:4px' width='50' height='30' viewBox='0 0 50 30'><defs><clipPath id='c8811191'><rect width='50' height='30' rx='4'/></clipPath></defs><g clip-path='url(#c8811191)'><rect x='0' y='0' width='17' height='30' fill='#000091'/><rect x='16.5' y='0' width='17' height='30' fill='#fbfbfb'/><rect x='33' y='0' width='17' height='30' fill='#e1000f'/></g></svg>
<div class='t' style='left:946.0px;top:1195.0px;font-size:28px;line-height:28px;color:#1b1b1b;transform:scaleX(0.9408);'>France</div>
<div class='t' style='left:1152.2px;top:1195.0px;font-size:28px;line-height:28px;color:#1b1b1b;transform:scaleX(0.9768);'>Lyon</div>
<div class='t' style='left:1370.0px;top:1195.0px;font-size:28px;line-height:28px;color:#1b1b1b;transform:scaleX(0.9536);'>+33 4 1234 5678</div>
<div class='t' style='left:1656.6px;top:1195.0px;font-size:28px;line-height:28px;color:#1b1b1b;letter-spacing:0.064px;'>www.papeteriefrancaise.fr</div>
<div class='t' style='left:2121.4px;top:1195.0px;font-size:28px;line-height:28px;color:#1b1b1b;transform:scaleX(0.9200);'>contact@papeteriefrançaise.fr</div>
<svg style='position:absolute;left:142px;top:1266px' width='40' height='40' viewBox='0 0 40 40'><defs><clipPath id='lg11'><rect width='40' height='40' rx='4.5'/></clipPath></defs><g clip-path='url(#lg11)'><rect width='40' height='40' fill='#ffffff'/>
<circle cx='20' cy='15' r='5' fill='#f7c63a'/>
<path d='M20 7V8.5M13 10L14 11M27 10L26 11M11 15H12.5M27.5 15H29' stroke='#f2b82a' stroke-width='1'/>
<path d='M8 22C12 18 17 19 20 25C23 19 28 18 32 22C30 28 25 32 20 32C15 32 10 28 8 22Z' fill='#58a83a'/>
<path d='M10 26C14 24 17 26 20 30C23 26 26 24 30 26' stroke='#2f7d2a' stroke-width='1' fill='none'/>
<circle cx='20' cy='28' r='2.5' fill='#ffffff'/>
<circle cx='15' cy='26' r='1.5' fill='#f4d04a'/><circle cx='25' cy='26' r='1.5' fill='#f4d04a'/>
</g></svg>
<div class='t' style='left:198.0px;top:1275.0px;font-size:28px;line-height:28px;color:#1b1b1b;transform:scaleX(0.9367);'>Bellezza Salute</div>
<div style='position:absolute;left:561px;top:1266px;width:177.9px;height:40px;background:#b96bda;border-radius:20px;'></div>
<div class='t' style='left:578.0px;top:1276.0px;font-size:22px;line-height:22px;color:#ffffff;transform:scaleX(0.9057);'>Beauty &amp; Health</div>
<svg style='position:absolute;left:881px;top:1271px;border-radius:4px' width='50' height='30' viewBox='0 0 50 30'><defs><clipPath id='c8811271'><rect width='50' height='30' rx='4'/></clipPath></defs><g clip-path='url(#c8811271)'><rect x='0' y='0' width='17' height='30' fill='#009246'/><rect x='16.5' y='0' width='17' height='30' fill='#fbfbfb'/><rect x='33' y='0' width='17' height='30' fill='#ce2b37'/></g></svg>
<div class='t' style='left:946.0px;top:1275.0px;font-size:28px;line-height:28px;color:#1b1b1b;letter-spacing:0.128px;'>Italy</div>
<div class='t' style='left:1152.2px;top:1275.0px;font-size:28px;line-height:28px;color:#1b1b1b;transform:scaleX(0.9598);'>Rome</div>
<div class='t' style='left:1370.0px;top:1275.0px;font-size:28px;line-height:28px;color:#1b1b1b;transform:scaleX(0.9547);'>+39 06 1234 5678</div>
<div class='t' style='left:1656.6px;top:1275.0px;font-size:28px;line-height:28px;color:#1b1b1b;letter-spacing:0.063px;'>www.bellezzasalute.it</div>
<div class='t' style='left:2096.2px;top:1275.0px;font-size:28px;line-height:28px;color:#1b1b1b;'>info@bellezzasalute.it</div>
<svg style='position:absolute;left:142px;top:1346px' width='40' height='40' viewBox='0 0 40 40'><defs><clipPath id='lg12'><rect width='40' height='40' rx='4.5'/></clipPath></defs><g clip-path='url(#lg12)'><rect width='40' height='40' fill='#f6f6f6'/>
<rect x='9' y='8' width='22' height='17' rx='3' fill='none' stroke='#141414' stroke-width='2'/>
<path d='M16 10C14 14 15 20 19 23C16 19 17 13 20 10Z' fill='#111'/>
<path d='M23 10C21 14 22 20 26 23C23 19 24 13 27 10Z' fill='#111'/>
<rect x='11' y='12' width='2' height='2' fill='#333'/><rect x='27' y='19' width='2' height='2' fill='#333'/>
<rect x='9' y='27' width='22' height='1.6' fill='#2a2a2a'/>
<rect x='14' y='29.8' width='12' height='0.6' fill='#999'/>
</g></svg>
<div class='t' style='left:198.0px;top:1355.0px;font-size:28px;line-height:28px;color:#1b1b1b;transform:scaleX(0.9539);'>Fashion Forward</div>
<div style='position:absolute;left:561px;top:1346px;width:101.7px;height:40px;background:#e55656;border-radius:20px;'></div>
<div class='t' style='left:577.9px;top:1356.0px;font-size:22px;line-height:22px;color:#ffffff;transform:scaleX(0.8966);'>Apparel</div>
<svg style='position:absolute;left:881px;top:1351px;border-radius:4px' width='50' height='30' viewBox='0 0 50 30'><defs><clipPath id='c8811351'><rect width='50' height='30' rx='4'/></clipPath></defs><g clip-path='url(#c8811351)'><rect x='0' y='0' width='17' height='30' fill='#000091'/><rect x='16.5' y='0' width='17' height='30' fill='#fbfbfb'/><rect x='33' y='0' width='17' height='30' fill='#e1000f'/></g></svg>
<div class='t' style='left:946.0px;top:1355.0px;font-size:28px;line-height:28px;color:#1b1b1b;transform:scaleX(0.9408);'>France</div>
<div class='t' style='left:1152.2px;top:1355.0px;font-size:28px;line-height:28px;color:#1b1b1b;transform:scaleX(0.8966);'>Paris</div>
<div class='t' style='left:1370.0px;top:1355.0px;font-size:28px;line-height:28px;color:#1b1b1b;transform:scaleX(0.9124);'>+33 1 5678 9101</div>
<div class='t' style='left:1656.6px;top:1355.0px;font-size:28px;line-height:28px;color:#1b1b1b;letter-spacing:0.066px;'>www.fashionforward.fr</div>
<div class='t' style='left:2120.8px;top:1355.0px;font-size:28px;line-height:28px;color:#1b1b1b;transform:scaleX(0.9200);'>info@fashionforward.fr</div>
<svg style='position:absolute;left:142px;top:1426px' width='40' height='40' viewBox='0 0 40 40'><defs><clipPath id='lg13'><rect width='40' height='40' rx='4.5'/></clipPath></defs><g clip-path='url(#lg13)'><rect width='40' height='40' fill='#ffffff'/>
<circle cx='20' cy='20' r='12.5' fill='#2f8f3a'/>
<circle cx='20' cy='20' r='10' fill='#45a84c' stroke='#e4f3e4' stroke-width='0.8'/>
<path d='M14 17L20 14L26 17V24L20 27L14 24Z' fill='#eef6ee' stroke='#2a6e30' stroke-width='0.8'/>
<path d='M14 17L20 20L26 17M20 20V27' stroke='#7fb886' stroke-width='0.7' fill='none'/>
<path d='M3 20H7M33 20H37M20 3V7M20 33V37' stroke='#6aa870' stroke-width='0.8'/>
</g></svg>
<div class='t' style='left:198.0px;top:1435.0px;font-size:28px;line-height:28px;color:#1b1b1b;transform:scaleX(0.9481);'>PackRight</div>
<div style='position:absolute;left:561px;top:1426px;width:123.6px;height:40px;background:#23964f;border-radius:20px;'></div>
<div class='t' style='left:578.3px;top:1436.0px;font-size:22px;line-height:22px;color:#ffffff;transform:scaleX(0.8662);'>Packaging</div>
<svg style='position:absolute;left:881px;top:1431px;border-radius:4px' width='50' height='30' viewBox='0 0 50 30'><defs><clipPath id='c8811431'><rect width='50' height='30' rx='4'/></clipPath></defs><g clip-path='url(#c8811431)'><rect x='0' y='0' width='50' height='30' fill='#c60b1e'/><rect x='0' y='7.5' width='50' height='15' fill='#ffc400'/><rect x='11' y='10' width='7' height='9' rx='2' fill='#ad1519' opacity='0.7'/></g></svg>
<div class='t' style='left:946.0px;top:1435.0px;font-size:28px;line-height:28px;color:#1b1b1b;transform:scaleX(0.9606);'>Spain</div>
<div class='t' style='left:1152.2px;top:1435.0px;font-size:28px;line-height:28px;color:#1b1b1b;letter-spacing:0.601px;'>Madrid</div>
<div class='t' style='left:1370.0px;top:1435.0px;font-size:28px;line-height:28px;color:#1b1b1b;transform:scaleX(0.9536);'>+34 91 234 5678</div>
<div class='t' style='left:1656.6px;top:1435.0px;font-size:28px;line-height:28px;color:#1b1b1b;letter-spacing:0.068px;'>www.packright.es</div>
<div class='t' style='left:2173.7px;top:1435.0px;font-size:28px;line-height:28px;color:#1b1b1b;transform:scaleX(0.9200);'>info@packright.es</div>
<svg style='position:absolute;left:142px;top:1506px' width='40' height='40' viewBox='0 0 40 40'><defs><clipPath id='lg14'><rect width='40' height='40' rx='4.5'/></clipPath></defs><g clip-path='url(#lg14)'><rect width='40' height='40' fill='#b88e55'/>
<rect x='0' y='0' width='40' height='40' fill='#c19a60'/>
<circle cx='20' cy='18' r='11' fill='#6a1d1a'/>
<path d='M10 18A10 10 0 0 1 30 18Z' fill='#b7352c'/>
<circle cx='20' cy='15' r='3.2' fill='#f1e0b0'/>
<path d='M9 20C14 17 26 17 31 20V24H9Z' fill='#4f7a2e'/>
<circle cx='13' cy='22' r='2.5' fill='#7e1a2a'/><circle cx='16.5' cy='24' r='2.5' fill='#8e2232'/>
<rect x='8' y='25' width='24' height='4' rx='1' fill='#ead9a8' stroke='#3e5a26' stroke-width='0.8'/>
<rect x='16' y='30' width='8' height='1.6' fill='#2e4a1e'/>
</g></svg>
<div class='t' style='left:198.0px;top:1515.0px;font-size:28px;line-height:28px;color:#1b1b1b;transform:scaleX(0.9704);'>Delicious Bites</div>
<div style='position:absolute;left:561px;top:1506px;width:195.6px;height:40px;background:#ebc44b;border-radius:20px;'></div>
<div class='t' style='left:577.8px;top:1516.0px;font-size:22px;line-height:22px;color:#ffffff;transform:scaleX(0.8890);'>Food &amp; Beverages</div>
<svg style='position:absolute;left:881px;top:1511px;border-radius:4px' width='50' height='30' viewBox='0 0 50 30'><defs><clipPath id='c8811511'><rect width='50' height='30' rx='4'/></clipPath></defs><g clip-path='url(#c8811511)'><rect x='0' y='0' width='17' height='30' fill='#009246'/><rect x='16.5' y='0' width='17' height='30' fill='#fbfbfb'/><rect x='33' y='0' width='17' height='30' fill='#ce2b37'/></g></svg>
<div class='t' style='left:946.0px;top:1515.0px;font-size:28px;line-height:28px;color:#1b1b1b;letter-spacing:0.128px;'>Italy</div>
<div class='t' style='left:1152.2px;top:1515.0px;font-size:28px;line-height:28px;color:#1b1b1b;transform:scaleX(0.9598);'>Rome</div>
<div class='t' style='left:1370.0px;top:1515.0px;font-size:28px;line-height:28px;color:#1b1b1b;transform:scaleX(0.9547);'>+39 06 1234 5678</div>
<div class='t' style='left:1656.6px;top:1515.0px;font-size:28px;line-height:28px;color:#1b1b1b;'>www.deliciousbites.it</div>
<div class='t' style='left:2096.2px;top:1515.0px;font-size:28px;line-height:28px;color:#1b1b1b;letter-spacing:0.107px;'>info@deliciousbites.it</div>
<svg style='position:absolute;left:142px;top:1586px' width='40' height='40' viewBox='0 0 40 40'><defs><clipPath id='lg15'><rect width='40' height='40' rx='4.5'/></clipPath></defs><g clip-path='url(#lg15)'><rect width='40' height='40' fill='#dff3f7'/>
<circle cx='20' cy='22' r='13' fill='#1d4a5e'/>
<path d='M10 16C15 12 25 12 30 16' stroke='#9ad6e6' stroke-width='1.5' fill='none'/>
<circle cx='26' cy='17' r='3' fill='#d8eef4'/>
</g></svg>
<div class='t' style='left:198.0px;top:1595.0px;font-size:28px;line-height:28px;color:#1b1b1b;transform:scaleX(0.9550);'>Electro Systems</div>
<div style='position:absolute;left:561px;top:1586px;width:127.6px;height:40px;background:#2f7fe8;border-radius:20px;'></div>
<div class='t' style='left:577.8px;top:1596.0px;font-size:22px;line-height:22px;color:#ffffff;transform:scaleX(0.8737);'>Electronics</div>
<svg style='position:absolute;left:881px;top:1591px;border-radius:4px' width='50' height='30' viewBox='0 0 50 30'><defs><clipPath id='c8811591'><rect width='50' height='30' rx='4'/></clipPath></defs><g clip-path='url(#c8811591)'><rect x='0' y='0' width='50' height='10' fill='#000'/><rect x='0' y='10' width='50' height='10' fill='#dd0000'/><rect x='0' y='20' width='50' height='10' fill='#ffce00'/></g></svg>
<div class='t' style='left:946.0px;top:1595.0px;font-size:28px;line-height:28px;color:#1b1b1b;transform:scaleX(0.9400);'>Germany</div>
<div class='t' style='left:1152.2px;top:1595.0px;font-size:28px;line-height:28px;color:#1b1b1b;transform:scaleX(0.9200);'>Munich</div>
<div class='t' style='left:1370.0px;top:1595.0px;font-size:28px;line-height:28px;color:#1b1b1b;transform:scaleX(0.9500);'>+49 89 1234 5678</div>
<div class='t' style='left:1656.6px;top:1595.0px;font-size:28px;line-height:28px;color:#1b1b1b;letter-spacing:0.755px;'>www.electrosystems.de</div>
<div class='t' style='left:2096.2px;top:1595.0px;font-size:28px;line-height:28px;color:#1b1b1b;transform:scaleX(0.8242);'>kontakt@electrosystems.de</div>
<div style='position:absolute;left:2531px;top:304px;width:6px;height:264px;background:#8a8a8a;border-radius:3px;'></div>
<div style='position:absolute;left:1736px;top:730px;width:640px;height:798px;background:#fff;border-radius:16px;box-shadow:0 8px 24px rgba(0,0,0,0.16),0 0 4px rgba(0,0,0,0.10)'></div>
<svg style='position:absolute;left:1762px;top:756px' width='48' height='48' viewBox='0 0 64 64'>
<defs><clipPath id='av1762756'><circle cx='32' cy='32' r='29'/></clipPath></defs>
<circle cx='32' cy='32' r='31.8' fill='#dfe5dc'/>
<circle cx='32' cy='32' r='29' fill='#a7d7dd'/>
<g clip-path='url(#av1762756)'>
<path d='M2 55C6 50 12 51 14 54C18 52 22 54 22 58L2 62Z' fill='#eef3ee'/>
<path d='M62 55C58 50 52 51 50 54C46 52 42 54 42 58L62 62Z' fill='#eef3ee'/>
<rect x='0' y='57' width='64' height='8' fill='#e9efe9'/>
<path d='M20 58.5H44' stroke='#7d8d9a' stroke-width='0.8'/>
</g>
<path d='M15.3 8V15' stroke='#f4f7f4' stroke-width='0.8'/>
<path d='M14 14.5L25 21L14.8 30Z' fill='#1e3a60'/><path d='M16.5 18.5L22 22L17 27Z' fill='#f2f6f0'/>
<path d='M50.5 14.5L39.5 21L49.7 30Z' fill='#1e3a60'/><path d='M48 18.5L42.5 22L47.5 27Z' fill='#f2f6f0'/>
<rect x='11.5' y='31.5' width='2.6' height='10.5' rx='1' fill='#1e3a60'/><rect x='50' y='31.5' width='2.6' height='10.5' rx='1' fill='#1e3a60'/>
<rect x='23.5' y='47' width='16' height='9.5' rx='4' fill='#4a7ea8'/>
<rect x='23.5' y='47.5' width='16' height='2.8' fill='#1e3a60'/>
<circle cx='32' cy='56' r='2.1' fill='#1e3a60' stroke='#e3b35f' stroke-width='0.9'/>
<ellipse cx='32' cy='35' rx='16.7' ry='13.4' fill='#f4f8f1'/>
<ellipse cx='32' cy='35.3' rx='14.2' ry='11' fill='#4a7ea8'/>
<path d='M34 24.5C40 24.6 45 28 46 33L34 33Z' fill='#1e3a60'/>
<circle cx='23.6' cy='36' r='5.2' fill='#f4f8f1'/><circle cx='40.4' cy='36' r='5.2' fill='#f4f8f1'/>
<circle cx='24' cy='36.5' r='3.6' fill='#1e3a60'/><circle cx='40' cy='36.5' r='3.6' fill='#1e3a60'/>
<circle cx='22.8' cy='35' r='1' fill='#f4f8f1'/><circle cx='38.8' cy='35' r='1' fill='#f4f8f1'/>
<path d='M31 40.5H33' stroke='#1e3a60' stroke-width='1'/>
</svg>
<div class='t' style='left:1979.0px;top:771.0px;font-size:28px;line-height:28px;color:#242424;font-weight:700;transform:scaleX(0.9279);'>Planny (Bot)</div>
<svg style='position:absolute;left:2296px;top:775px' width='44' height='16' viewBox='2296 775 44 16'><circle cx='2304.5' cy='783' r='3' fill='#616161'/><circle cx='2318' cy='783' r='3' fill='#616161'/><circle cx='2331.5' cy='783' r='3' fill='#616161'/></svg>
<div style='position:absolute;left:1736px;top:828px;width:640px;height:2px;background:#e6e6ea;border-radius:0px;'></div>
<div class='t' style='left:2008.8px;top:868.6px;font-size:24px;line-height:24px;color:#616161;letter-spacing:0.135px;'>3/8/2024</div>
<svg style='position:absolute;left:1900px;top:920px' width='460' height='182' viewBox='1900 920 460 182'><path d='M1920 926H2347C2351 926 2352 929 2350 931L2334 947V1082C2334 1090 2328 1096 2320 1096H1920C1912 1096 1906 1090 1906 1082V940C1906 932 1912 926 1920 926Z' fill='#0f6cbd'/></svg>
<div class='t' style='left:1920.0px;top:942.7px;font-size:28px;line-height:28px;color:#ffffff;transform:scaleX(0.9937);'>Please highlight all the suppliers</div>
<div class='t' style='left:1920.0px;top:982.6px;font-size:28px;line-height:28px;color:#ffffff;letter-spacing:0.022px;'>who had delays in delivering the</div>
<div class='t' style='left:1920.0px;top:1022.7px;font-size:28px;line-height:28px;color:#ffffff;transform:scaleX(0.9464);'>services</div>
<div class='t' style='left:2211.6px;top:1066.6px;font-size:20px;line-height:20px;color:#dce8f5;transform:scaleX(0.8599);'>11:31 AM</div>
<svg style='position:absolute;left:2290px;top:1062px' width='36' height='24' viewBox='2290 1062 36 24'><path d='M2294 1075L2299 1080.5L2310 1068M2303 1079.5L2304 1080.5L2320 1067' stroke='#6fcf76' stroke-width='2' fill='none' stroke-linecap='round' stroke-linejoin='round'/></svg>
<svg style='position:absolute;left:1760px;top:1128px' width='64' height='64' viewBox='0 0 64 64'>
<defs><clipPath id='av17601128'><circle cx='32' cy='32' r='29'/></clipPath></defs>
<circle cx='32' cy='32' r='31.8' fill='#dfe5dc'/>
<circle cx='32' cy='32' r='29' fill='#a7d7dd'/>
<g clip-path='url(#av17601128)'>
<path d='M2 55C6 50 12 51 14 54C18 52 22 54 22 58L2 62Z' fill='#eef3ee'/>
<path d='M62 55C58 50 52 51 50 54C46 52 42 54 42 58L62 62Z' fill='#eef3ee'/>
<rect x='0' y='57' width='64' height='8' fill='#e9efe9'/>
<path d='M20 58.5H44' stroke='#7d8d9a' stroke-width='0.8'/>
</g>
<path d='M15.3 8V15' stroke='#f4f7f4' stroke-width='0.8'/>
<path d='M14 14.5L25 21L14.8 30Z' fill='#1e3a60'/><path d='M16.5 18.5L22 22L17 27Z' fill='#f2f6f0'/>
<path d='M50.5 14.5L39.5 21L49.7 30Z' fill='#1e3a60'/><path d='M48 18.5L42.5 22L47.5 27Z' fill='#f2f6f0'/>
<rect x='11.5' y='31.5' width='2.6' height='10.5' rx='1' fill='#1e3a60'/><rect x='50' y='31.5' width='2.6' height='10.5' rx='1' fill='#1e3a60'/>
<rect x='23.5' y='47' width='16' height='9.5' rx='4' fill='#4a7ea8'/>
<rect x='23.5' y='47.5' width='16' height='2.8' fill='#1e3a60'/>
<circle cx='32' cy='56' r='2.1' fill='#1e3a60' stroke='#e3b35f' stroke-width='0.9'/>
<ellipse cx='32' cy='35' rx='16.7' ry='13.4' fill='#f4f8f1'/>
<ellipse cx='32' cy='35.3' rx='14.2' ry='11' fill='#4a7ea8'/>
<path d='M34 24.5C40 24.6 45 28 46 33L34 33Z' fill='#1e3a60'/>
<circle cx='23.6' cy='36' r='5.2' fill='#f4f8f1'/><circle cx='40.4' cy='36' r='5.2' fill='#f4f8f1'/>
<circle cx='24' cy='36.5' r='3.6' fill='#1e3a60'/><circle cx='40' cy='36.5' r='3.6' fill='#1e3a60'/>
<circle cx='22.8' cy='35' r='1' fill='#f4f8f1'/><circle cx='38.8' cy='35' r='1' fill='#f4f8f1'/>
<path d='M31 40.5H33' stroke='#1e3a60' stroke-width='1'/>
</svg>
<svg style='position:absolute;left:1830px;top:1124px' width='452' height='182' viewBox='1830 1124 452 182'><path d='M1836 1128H2264C2272 1128 2278 1134 2278 1142V1288C2278 1296 2272 1302 2264 1302H1864C1856 1302 1850 1296 1850 1288V1149L1835 1132C1833 1130 1834 1128 1836 1128Z' fill='#f1f1f6'/></svg>
<div class='t' style='left:1861.0px;top:1143.0px;font-size:28px;line-height:28px;color:#242424;font-weight:700;transform:scaleX(0.9367);'>Planny</div>
<div class='t' style='left:1968.7px;top:1144.6px;font-size:24px;line-height:24px;color:#616161;transform:scaleX(0.9714);'>Bot</div>
<div class='t' style='left:1861.5px;top:1188.5px;font-size:28px;line-height:28px;color:#242424;transform:scaleX(0.9852);'>Sure! I have marked them with a</div>
<div class='t' style='left:1861.5px;top:1229.3px;font-size:28px;line-height:28px;color:#242424;letter-spacing:0.110px;'>yellow background</div>
<div class='t' style='left:2187.0px;top:1273.0px;font-size:20px;line-height:20px;color:#707070;transform:scaleX(0.8912);'>11:35 AM</div>
<div style='position:absolute;left:1760px;top:1334px;width:592px;height:64px;background:#005fb8;border-radius:6px;'></div>
<div class='t' style='left:1918.5px;top:1353.4px;font-size:28px;line-height:28px;color:#ffffff;letter-spacing:0.123px;'>Show highlighted only</div>
<div style='position:absolute;left:1736px;top:1430px;width:640px;height:2px;background:#e6e6ea;border-radius:0px;'></div>
<div class='t' style='left:1760.0px;top:1467.4px;font-size:28px;line-height:28px;color:#707070;transform:scaleX(0.9759);'>Start typing...</div>
<svg style='position:absolute;left:2314px;top:1458px' width='44' height='40' viewBox='2314 1458 44 40'><path d='M2322.5 1466L2350.5 1477.8L2322.5 1489.8L2324.2 1477.8Z' stroke='#8b8b92' stroke-width='2.6' fill='none' stroke-linejoin='round'/><path d='M2324.5 1477.8H2335' stroke='#8b8b92' stroke-width='2.6' stroke-linecap='round'/></svg>
<div style='position:absolute;left:2392px;top:1432px;width:96px;height:96px;background:#fff;border-radius:50%;box-shadow:0 4px 14px rgba(0,0,0,0.16),0 0 3px rgba(0,0,0,0.08)'></div>
<svg style='position:absolute;left:2410px;top:1450px' width='60' height='60' viewBox='2410 1450 60 60'><path d='M2440.5 1457V1460' stroke='#616161' stroke-width='2.8' stroke-linecap='round'/><rect x='2427.2' y='1460.4' width='27.5' height='18.3' rx='4.5' stroke='#616161' stroke-width='2.8' fill='none'/><circle cx='2434' cy='1469.5' r='2.8' fill='#616161'/><circle cx='2446' cy='1469.5' r='2.8' fill='#616161'/><path d='M2424.5 1485.4H2456.3C2458.5 1485.4 2459.5 1486.5 2459.5 1488.5C2459.5 1497 2451 1502.4 2440.5 1502.4C2430 1502.4 2421.3 1497 2421.3 1488.5C2421.3 1486.5 2422.3 1485.4 2424.5 1485.4Z' stroke='#616161' stroke-width='2.8' fill='none' stroke-linejoin='round'/></svg>
</div></body></html>
